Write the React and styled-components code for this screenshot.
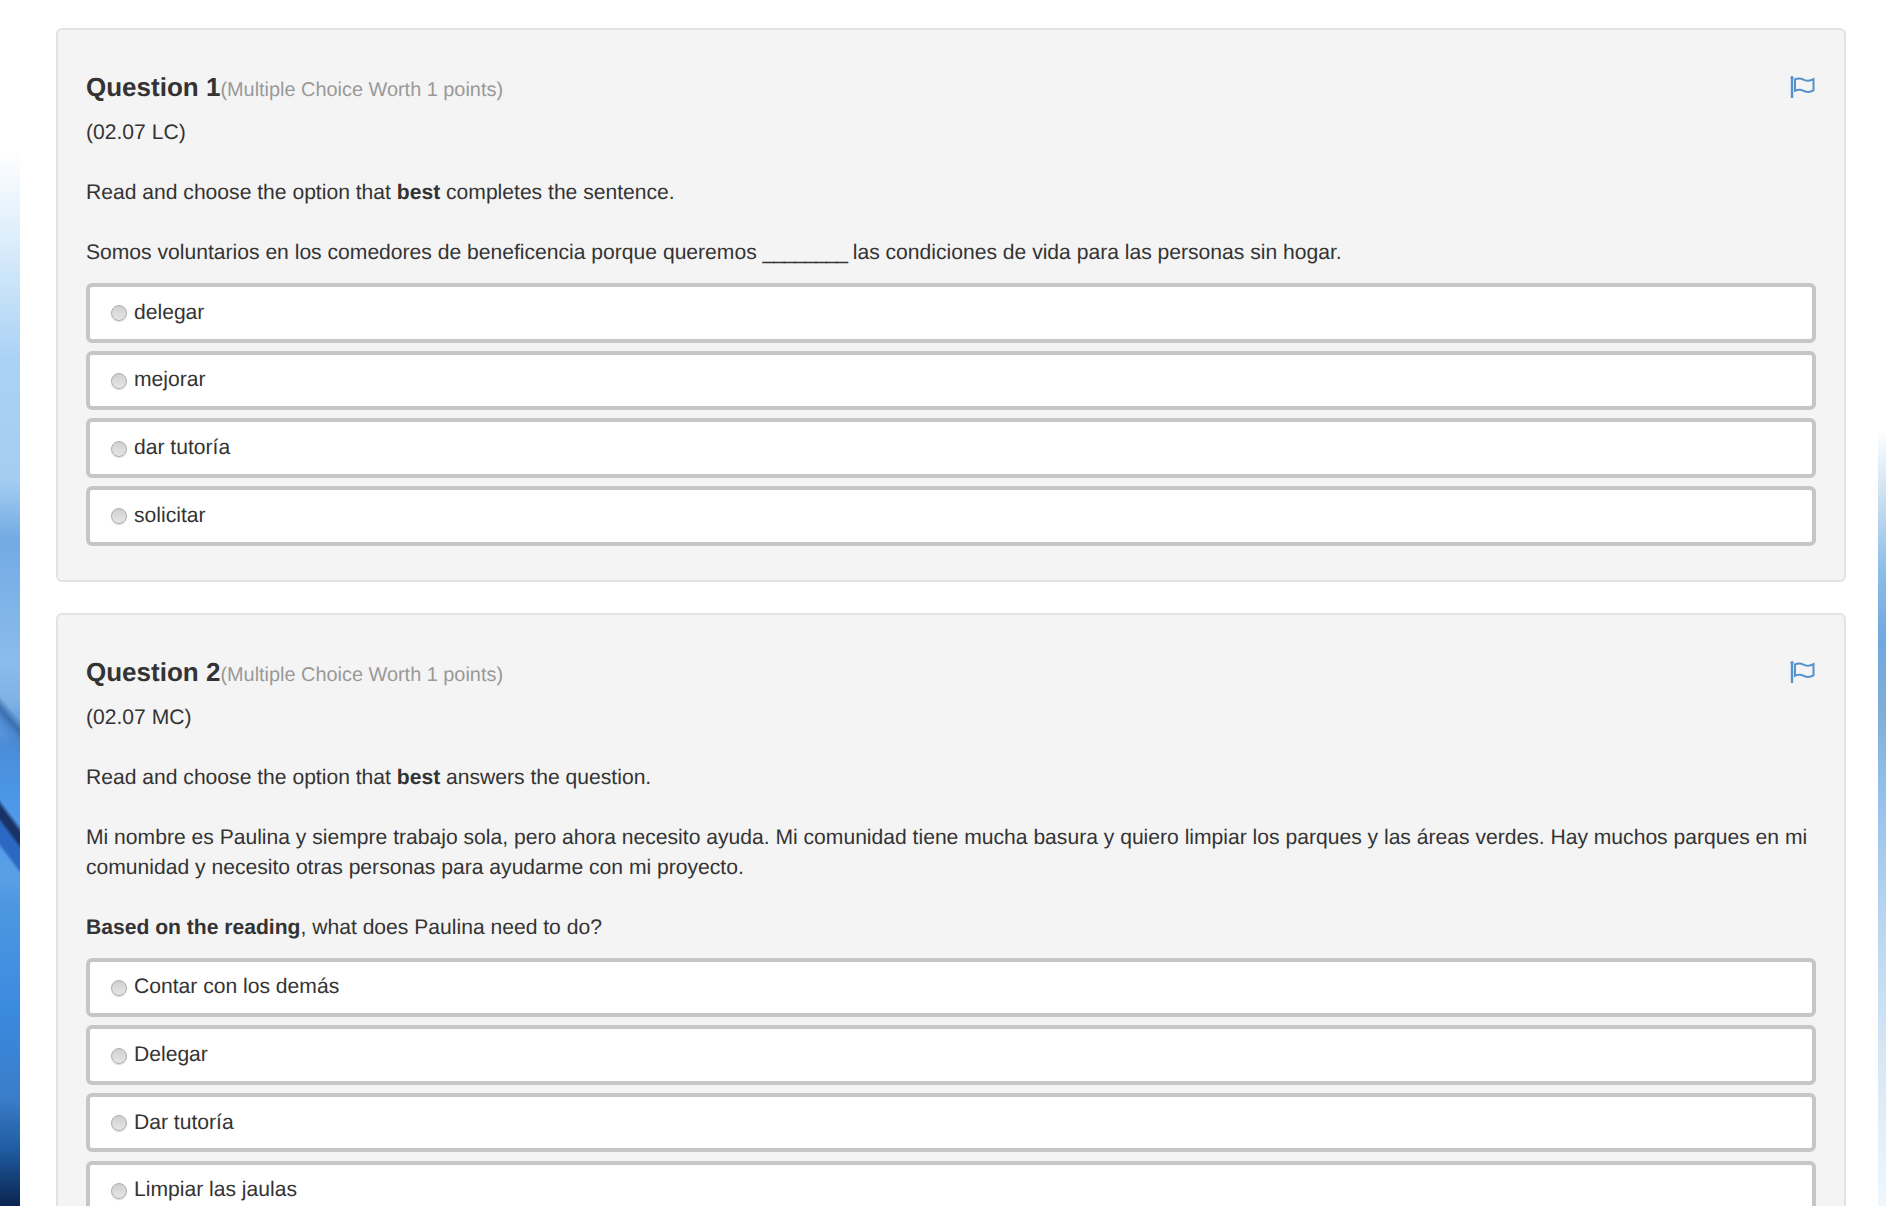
import styled, { createGlobalStyle } from "styled-components";

const Blank = styled.span`
  letter-spacing: -1.2px;
`;

const questions = [
  {
    id: 1,
    code: "(02.07 LC)",
    blocks: [
      <>
        Read and choose the option that <strong>best</strong> completes the sentence.
      </>,
      <>
        Somos voluntarios en los comedores de beneficencia porque queremos{" "}
        <Blank>________</Blank> las condiciones de vida para las personas sin hogar.
      </>,
    ],
    options: ["delegar", "mejorar", "dar tutoría", "solicitar"],
  },
  {
    id: 2,
    code: "(02.07 MC)",
    blocks: [
      <>
        Read and choose the option that <strong>best</strong> answers the question.
      </>,
      <>
        Mi nombre es Paulina y siempre trabajo sola, pero ahora necesito ayuda. Mi comunidad
        tiene mucha basura y quiero limpiar los parques y las áreas verdes. Hay muchos parques
        en mi comunidad y necesito otras personas para ayudarme con mi proyecto.
      </>,
      <>
        <strong>Based on the reading</strong>, what does Paulina need to do?
      </>,
    ],
    options: ["Contar con los demás", "Delegar", "Dar tutoría", "Limpiar las jaulas"],
  },
];

function FlagIcon() {
  return (
    <FlagSvg viewBox="0 0 26 24" fill="none" stroke="#5592cb" strokeWidth="2">
      <circle cx="3" cy="2.5" r="1.6" fill="#5592cb" stroke="none" />
      <path d="M3 3V23" strokeWidth="2.4" />
      <path d="M6 4.5C9.5 2.8 12 3.4 15 4.8C18.5 6.4 21.5 6 24.5 4.2V15.4C21.5 17.2 18.5 17.6 15 16C12 14.6 9.5 14.2 6 15.8Z" />
    </FlagSvg>
  );
}

export default function App() {
  return (
    <>
      <GlobalStyle />
      <Page>
        <LeftStrip />
        <Content>
          {questions.map((question) => (
            <Card key={question.id}>
              <CardHeader>
                <Title>
                  Question {question.id}
                  <Worth>(Multiple Choice Worth 1 points)</Worth>
                </Title>
                <FlagIcon />
              </CardHeader>
              <Code>{question.code}</Code>
              {question.blocks.map((block, index) => (
                <Paragraph key={index}>{block}</Paragraph>
              ))}
              <OptionList>
                {question.options.map((option) => (
                  <Option key={option}>
                    <Radio />
                    {option}
                  </Option>
                ))}
              </OptionList>
            </Card>
          ))}
        </Content>
        <RightStrip />
      </Page>
    </>
  );
}

const GlobalStyle = createGlobalStyle`
  html, body {
    margin: 0;
    height: 100%;
    background: #fff;
    overflow: hidden;
  }
`;

const Page = styled.div`
  display: grid;
  grid-template-columns: 20px 1fr 8px;
  height: 100vh;
  overflow: hidden;
  font-family: "Liberation Sans", Arial, sans-serif;
  font-size: 21.1px;
  line-height: 30px;
  color: #333;
  text-rendering: geometricPrecision;
`;

const LeftStrip = styled.div`
  background:
    linear-gradient(50deg, transparent 25%, #4a85cc 42%, #3c6fae 50%, transparent 62%) 0 680px / 20px 80px no-repeat,
    linear-gradient(53deg, transparent 25%, #2a68c4 30%, #2a68c4 45%, #1a3265 50%, #1a3265 58%, transparent 64%) 0 780px / 20px 100px no-repeat,
    linear-gradient(
      180deg,
      #ffffff 0,
      #ffffff 150px,
      #dcedfb 240px,
      #aad2f5 360px,
      #a4cdf1 480px,
      #72aae3 540px,
      #8abcec 660px,
      #80b2e6 700px,
      #4a8cd8 745px,
      #4c97e8 800px,
      #5aa0e6 878px,
      #4f98e0 900px,
      #3a8ae0 1010px,
      #3a7cc8 1100px,
      #1f5ba0 1150px,
      #0a2550 1206px
    );
`;

const RightStrip = styled.div`
  background: linear-gradient(
    180deg,
    #ffffff 0,
    #ffffff 430px,
    #c9dff0 500px,
    #8dbdea 570px,
    #70a9dc 640px,
    #82aedb 720px,
    #91bdec 780px,
    #b4d3ef 900px,
    #d5e6f4 1050px,
    #f0f7fd 1206px
  );
`;

const Content = styled.main`
  display: flex;
  flex-direction: column;
  gap: 31px;
  padding: 28px 32px 0 36px;
`;

const Card = styled.section`
  flex: none;
  padding: 28px 28px 34px;
  background: #f4f4f4;
  border: 2px solid #e3e3e3;
  border-radius: 6px;
`;

const CardHeader = styled.header`
  display: flex;
  align-items: flex-start;
  justify-content: space-between;
  height: 60px;
`;

const Title = styled.h2`
  margin: 0;
  font-size: 26px;
  line-height: 58px;
  font-weight: 700;
  color: #333;
`;

const Worth = styled.small`
  font-size: 19.9px;
  font-weight: 400;
  color: #999;
`;

const FlagSvg = styled.svg`
  width: 26px;
  height: 24px;
  margin: 17px 1px 0 0;
`;

const Code = styled.p`
  margin: 0;
`;

const Paragraph = styled.p`
  margin: 30px 0 0;
`;

const OptionList = styled.div`
  display: flex;
  flex-direction: column;
  gap: 8.2px;
  margin-top: 15px;
`;

const Option = styled.label`
  display: flex;
  align-items: center;
  gap: 7px;
  height: 59.5px;
  box-sizing: border-box;
  padding-left: 21px;
  background: #fff;
  border: 4px solid #c6c6c6;
  border-radius: 6px;
`;

const Radio = styled.span`
  flex: none;
  box-sizing: border-box;
  width: 16px;
  height: 16px;
  margin-top: 1px;
  border: 1px solid #adadad;
  border-radius: 50%;
  background: linear-gradient(180deg, #d0d0d0, #e6e6e6);
  box-shadow: 0 1px 1px rgba(0, 0, 0, 0.15);
`;
